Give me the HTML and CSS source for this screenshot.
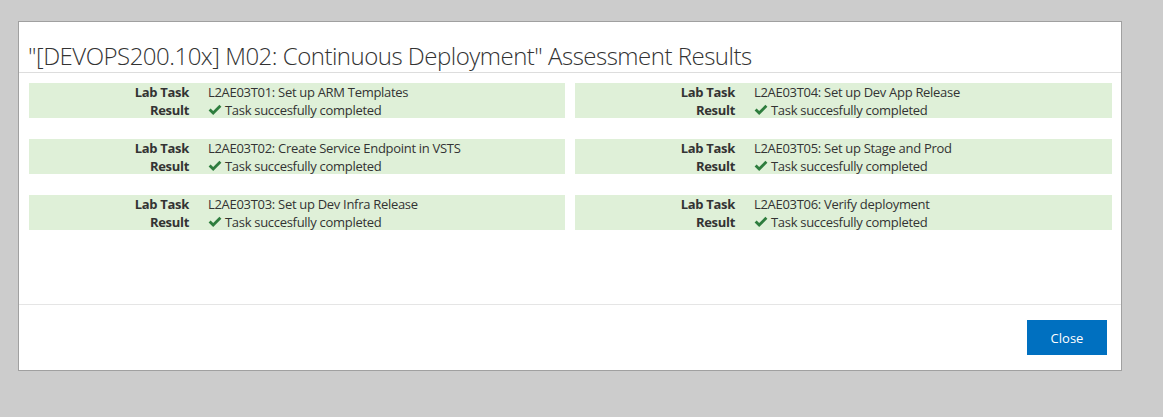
FILE: index.html
```html
<!DOCTYPE html>
<html>
<head>
<meta charset="utf-8">
<link rel="stylesheet" href="styles.css">
</head>
<body>
<div class="modal">
  <div class="modal-header">
    <h1 class="title">"[DEVOPS200.10x] M02: Continuous Deployment" Assessment Results</h1>
  </div>
  <div class="modal-body">
    <div class="grid">
      <div class="task">
        <div class="lbl">Lab Task</div><div class="val">L2AE03T01: Set up ARM Templates</div>
        <div class="lbl">Result</div><div class="val"><svg class="ok" viewBox="0 0 14 12"><path d="M0.6 6.4 L2.6 4.4 L5.2 7.0 L11.4 0.8 L13.4 2.8 L5.2 11.0 Z"/></svg>Task succesfully completed</div>
      </div>
      <div class="task">
        <div class="lbl">Lab Task</div><div class="val">L2AE03T04: Set up Dev App Release</div>
        <div class="lbl">Result</div><div class="val"><svg class="ok" viewBox="0 0 14 12"><path d="M0.6 6.4 L2.6 4.4 L5.2 7.0 L11.4 0.8 L13.4 2.8 L5.2 11.0 Z"/></svg>Task succesfully completed</div>
      </div>
      <div class="task">
        <div class="lbl">Lab Task</div><div class="val">L2AE03T02: Create Service Endpoint in VSTS</div>
        <div class="lbl">Result</div><div class="val"><svg class="ok" viewBox="0 0 14 12"><path d="M0.6 6.4 L2.6 4.4 L5.2 7.0 L11.4 0.8 L13.4 2.8 L5.2 11.0 Z"/></svg>Task succesfully completed</div>
      </div>
      <div class="task">
        <div class="lbl">Lab Task</div><div class="val">L2AE03T05: Set up Stage and Prod</div>
        <div class="lbl">Result</div><div class="val"><svg class="ok" viewBox="0 0 14 12"><path d="M0.6 6.4 L2.6 4.4 L5.2 7.0 L11.4 0.8 L13.4 2.8 L5.2 11.0 Z"/></svg>Task succesfully completed</div>
      </div>
      <div class="task">
        <div class="lbl">Lab Task</div><div class="val">L2AE03T03: Set up Dev Infra Release</div>
        <div class="lbl">Result</div><div class="val"><svg class="ok" viewBox="0 0 14 12"><path d="M0.6 6.4 L2.6 4.4 L5.2 7.0 L11.4 0.8 L13.4 2.8 L5.2 11.0 Z"/></svg>Task succesfully completed</div>
      </div>
      <div class="task">
        <div class="lbl">Lab Task</div><div class="val">L2AE03T06: Verify deployment</div>
        <div class="lbl">Result</div><div class="val"><svg class="ok" viewBox="0 0 14 12"><path d="M0.6 6.4 L2.6 4.4 L5.2 7.0 L11.4 0.8 L13.4 2.8 L5.2 11.0 Z"/></svg>Task succesfully completed</div>
      </div>
    </div>
  </div>
  <div class="modal-footer">
    <button class="btn">Close</button>
  </div>
</div>
</body>
</html>
```
FILE: styles.css
```css
html, body {
  margin: 0;
  padding: 0;
  background: #cccccc;
  font-family: "Open Sans", "Noto Sans", sans-serif;
  color: #333333;
}
body {
  padding: 21px 0 0 18px;
  height: 417px;
  box-sizing: border-box;
}
.modal {
  width: 1104px;
  height: 350px;
  box-sizing: border-box;
  background: #ffffff;
  border: 1px solid #a0a0a0;
  display: flex;
  flex-direction: column;
}
.modal-header {
  height: 51px;
  box-sizing: border-box;
  border-bottom: 1px solid #dddddd;
  padding: 0 0 0 9px;
  display: flex;
  align-items: flex-end;
}
.title {
  margin: 0 0 1px 0;
  font-size: 24px;
  font-weight: 300;
  line-height: 30px;
  letter-spacing: -0.5px;
  color: #333333;
  white-space: nowrap;
}
.modal-body {
  height: 232px;
  box-sizing: border-box;
  border-bottom: 1px solid #e5e5e5;
  padding: 10px 9px 0 10px;
}
.grid {
  display: grid;
  grid-template-columns: 536px 537px;
  column-gap: 10px;
  row-gap: 21px;
}
.task {
  background: #dff0d8;
  height: 35px;
  display: grid;
  grid-template-columns: 160px 1fr;
  column-gap: 19px;
  align-content: center;
  font-size: 13px;
  line-height: 18px;
  letter-spacing: -0.3px;
}
.lbl {
  text-align: right;
  font-weight: 700;
}
.val {
  display: flex;
  align-items: center;
}
.ok {
  width: 14px;
  height: 12px;
  fill: #2e7d3e;
  margin-right: 3px;
}
.modal-footer {
  flex: 1;
  display: flex;
  justify-content: flex-end;
  align-items: flex-start;
  padding: 15px 14px 0 0;
}
.btn {
  width: 80px;
  height: 35px;
  border: none;
  background: #0070c0;
  color: #ffffff;
  font-family: "Open Sans", "Noto Sans", sans-serif;
  font-size: 13px;
  padding: 0;
}
```
